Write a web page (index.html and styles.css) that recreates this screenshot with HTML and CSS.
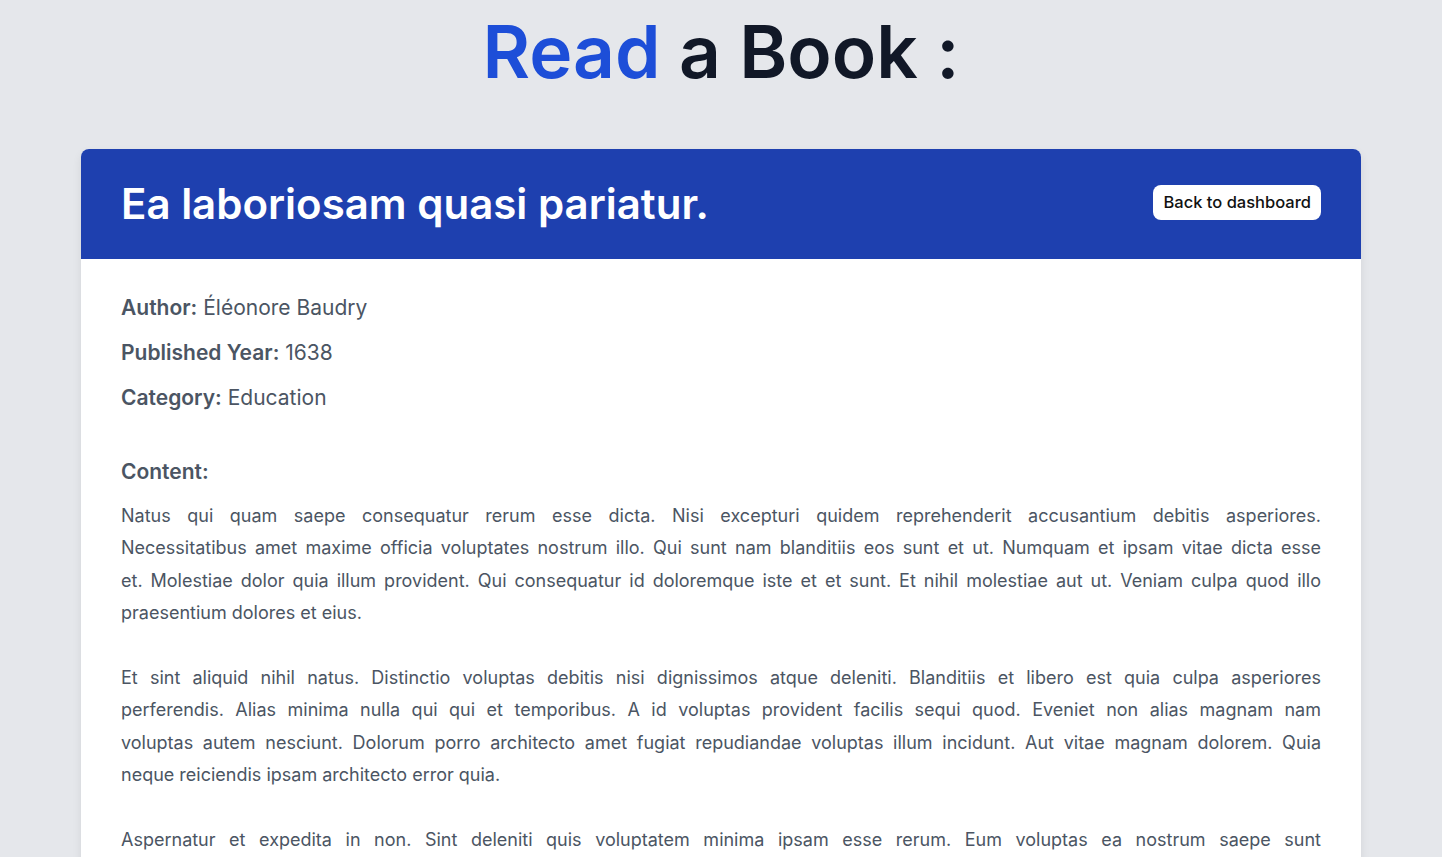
FILE: index.html
```html
<!DOCTYPE html>
<html lang="en">
<head>
<meta charset="utf-8">
<title>Read a Book</title>
<link rel="stylesheet" href="styles.css">
</head>
<body>
<main class="page">
  <h1 class="page-title"><span class="accent">Read</span> a Book :</h1>
  <article class="card">
    <header class="card-header">
      <h2 class="book-title">Ea laboriosam quasi pariatur.</h2>
      <a class="back-btn" href="#">Back to dashboard</a>
    </header>
    <div class="card-body">
      <div class="meta">
        <p class="meta-line"><strong>Author:</strong> Éléonore Baudry</p>
        <p class="meta-line"><strong>Published Year:</strong> 1638</p>
        <p class="meta-line"><strong>Category:</strong> Education</p>
      </div>
      <section class="content">
        <h3 class="content-label">Content:</h3>
        <p class="para"><span class="ln">Natus qui quam saepe consequatur rerum esse dicta. Nisi excepturi quidem reprehenderit accusantium debitis asperiores.</span> <span class="ln">Necessitatibus amet maxime officia voluptates nostrum illo. Qui sunt nam blanditiis eos sunt et ut. Numquam et ipsam vitae dicta esse</span> <span class="ln">et. Molestiae dolor quia illum provident. Qui consequatur id doloremque iste et et sunt. Et nihil molestiae aut ut. Veniam culpa quod illo</span> <span class="tail">praesentium dolores et eius.</span></p>
        <p class="para"><span class="ln">Et sint aliquid nihil natus. Distinctio voluptas debitis nisi dignissimos atque deleniti. Blanditiis et libero est quia culpa asperiores</span> <span class="ln">perferendis. Alias minima nulla qui qui et temporibus. A id voluptas provident facilis sequi quod. Eveniet non alias magnam nam</span> <span class="ln">voluptas autem nesciunt. Dolorum porro architecto amet fugiat repudiandae voluptas illum incidunt. Aut vitae magnam dolorem. Quia</span> <span class="tail">neque reiciendis ipsam architecto error quia.</span></p>
        <p class="para"><span class="ln">Aspernatur et expedita in non. Sint deleniti quis voluptatem minima ipsam esse rerum. Eum voluptas ea nostrum saepe sunt</span> <span class="tail">quia. Voluptatem quis aut quia. Et qui eos ut laudantium ut aliquam. Ipsa odit fugiat ad sunt. Eos et molestias quam et cum. Molestiae est voluptas ut.</span></p>
      </section>
    </div>
  </article>
</main>
</body>
</html>
```

FILE: styles.css
```css
* { box-sizing: border-box; }

html, body {
  margin: 0;
  padding: 0;
  background: #e5e7eb;
}

body {
  font-family: "Inter", "Noto Sans", sans-serif;
  color: #4b5563;
}

.page {
  display: flex;
  flex-direction: column;
  align-items: center;
  padding-top: 16px;
}

.page-title {
  margin: 0;
  font-size: 73px;
  line-height: 72px;
  font-weight: 600;
  color: #111827;
  text-align: center;
}

.accent { color: #1d4ed8; }

.card {
  margin-top: 61px;
  width: 1280px;
  background: #ffffff;
  border-radius: 8px;
  overflow: hidden;
  box-shadow: 0 4px 10px rgba(0, 0, 0, 0.08);
}

.card-header {
  background: #1e40af;
  height: 110px;
  padding: 0 40px;
  display: flex;
  align-items: center;
  justify-content: space-between;
}

.book-title {
  margin: 0;
  color: #ffffff;
  font-size: 42px;
  line-height: 50px;
  font-weight: 600;
}

.back-btn {
  display: inline-flex;
  align-items: center;
  height: 35px;
  padding: 0 10px;
  background: #ffffff;
  color: #111111;
  border-radius: 8px;
  font-size: 16.5px;
  font-weight: 500;
  text-decoration: none;
  margin-top: -4px;
}

.card-body {
  padding: 34px 40px;
}

.meta {
  display: flex;
  flex-direction: column;
  gap: 16px;
}

.meta-line {
  margin: 0;
  font-size: 21px;
  line-height: 29px;
}

.meta-line strong { font-weight: 600; }

.content {
  margin-top: 46px;
}

.content-label {
  margin: 0 0 14px;
  font-size: 21px;
  line-height: 28px;
  font-weight: 600;
}

.para {
  margin: 0 0 32.4px;
  font-size: 18px;
  line-height: 32.4px;
  text-align: justify;
}

.ln {
  display: block;
  text-align: justify;
  text-align-last: justify;
}

.tail {
  display: block;
  text-align: justify;
}
```
